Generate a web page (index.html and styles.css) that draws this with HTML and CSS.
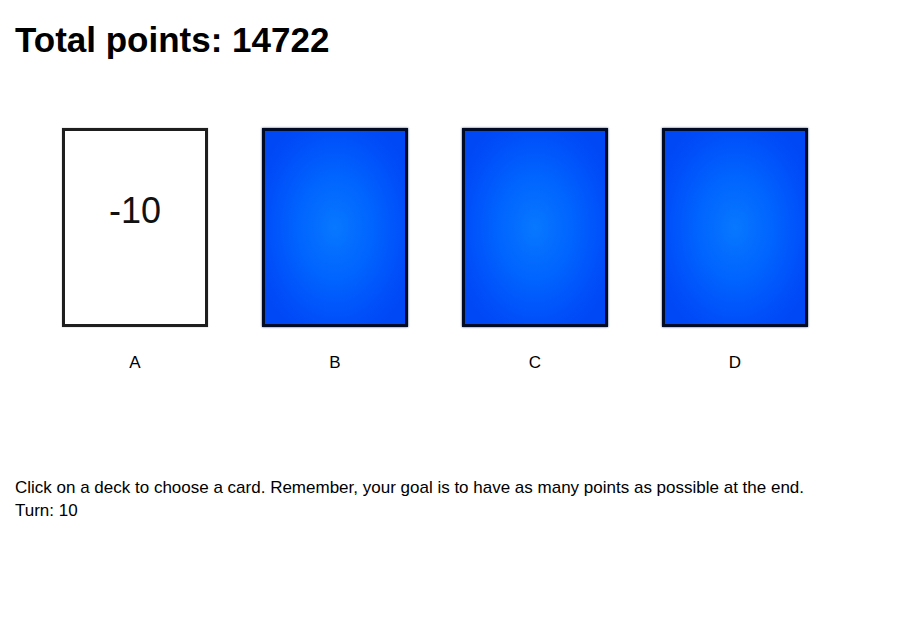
FILE: index.html
```html
<!DOCTYPE html>
<html>
<head>
<meta charset="utf-8">
<link rel="stylesheet" href="styles.css">
</head>
<body>
<div class="page">
  <h1 class="total">Total points: 14722</h1>
  <div class="decks">
    <div class="deck">
      <div class="card card-face"><span class="value">-10</span></div>
      <div class="label">A</div>
    </div>
    <div class="deck">
      <div class="card card-back"></div>
      <div class="label">B</div>
    </div>
    <div class="deck">
      <div class="card card-back"></div>
      <div class="label">C</div>
    </div>
    <div class="deck">
      <div class="card card-back"></div>
      <div class="label">D</div>
    </div>
  </div>
  <div class="info">
    <div>Click on a deck to choose a card. Remember, your goal is to have as many points as possible at the end.</div>
    <div>Turn: 10</div>
  </div>
</div>
</body>
</html>
```
FILE: styles.css
```css
html, body {
  margin: 0;
  padding: 0;
  background: #fff;
}
body {
  font-family: "Liberation Sans", Arial, Helvetica, sans-serif;
  color: #000;
}
.page {
  padding: 20px 15px;
}
.total {
  margin: 0;
  font-size: 35px;
  line-height: 40px;
  font-weight: bold;
}
.decks {
  display: flex;
  gap: 54px;
  margin-top: 68px;
  padding-left: 47px;
}
.deck {
  width: 146px;
  display: flex;
  flex-direction: column;
  align-items: center;
}
.card {
  box-sizing: border-box;
  width: 146px;
  height: 199px;
}
.card-face {
  border: 3px solid #1e1e1e;
  background: #fff;
  box-shadow: 0 0 1px rgba(0,0,0,0.4);
  display: flex;
  justify-content: center;
  padding-top: 60px;
}
.value {
  font-size: 36px;
  line-height: 40px;
  color: #111;
}
.card-back {
  border: 3px solid #020b26;
  background: radial-gradient(ellipse 60% 60% at 50% 50%, #0878ff 0%, #0064ff 45%, #0050fa 80%, #0048f6 100%);
  box-shadow: 0 0 2px rgba(0, 40, 90, 0.8);
}
.label {
  margin-top: 27px;
  font-size: 17px;
  line-height: 18px;
}
.info {
  margin-top: 104px;
  font-size: 17px;
  line-height: 23px;
}
```
